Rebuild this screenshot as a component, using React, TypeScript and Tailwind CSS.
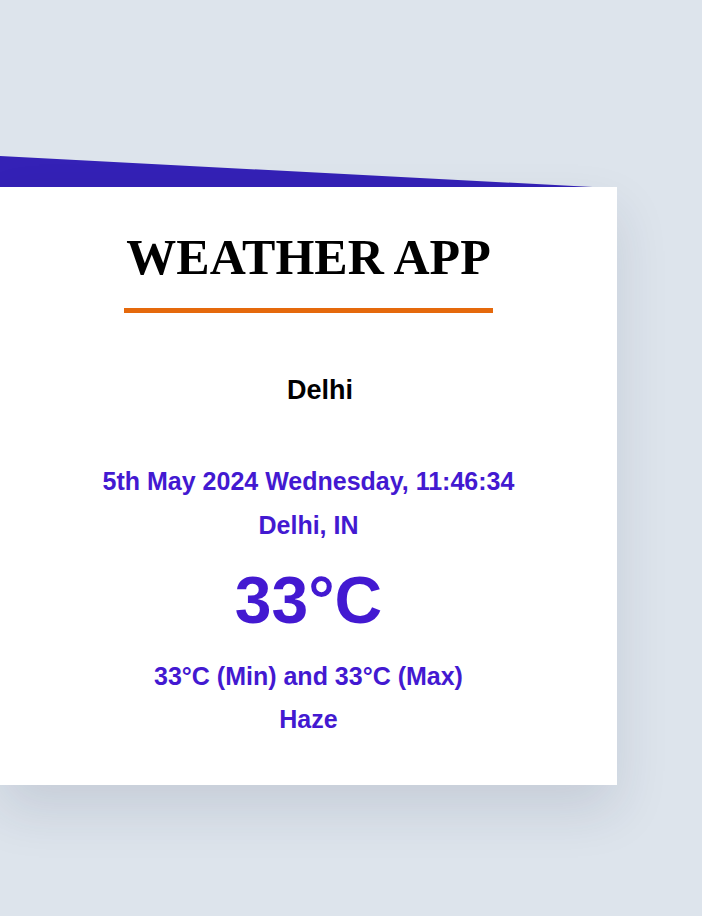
export default function App() {
  const sans = { fontFamily: '"Liberation Sans", Arial, sans-serif' };
  return (
    <div className="min-h-[916px] w-full overflow-hidden bg-[#dde4ec] pt-[187px]" style={sans}>
      <div className="relative w-[617px]">
        {/* tilted band peeking out above the card */}
        <div className="absolute left-0 top-[-31px] h-[480px] w-[617px] origin-top-left rotate-[3deg] bg-[#3421b6]" />
        <div className="relative flex flex-col items-center bg-white pb-[52px] pt-[42px] text-center shadow-[0_25px_50px_rgba(30,45,70,0.12)]">
          <h1
            className="text-[50px] font-bold leading-[57px] text-black"
            style={{ fontFamily: '"Liberation Serif", "Times New Roman", serif' }}
          >
            WEATHER APP
          </h1>
          <div className="mt-[22px] h-[5px] w-[369px] bg-[#e5690c]" />
          <p className="mt-[62px] pl-[23px] text-[27px] font-bold leading-[31px] text-black">Delhi</p>
          <div className="mt-[61px] flex flex-col items-center text-[25px] font-bold leading-[28px] text-[#4319d1]">
            <p>5th May 2024 Wednesday, 11:46:34</p>
            <p className="mt-[16px]">Delhi, IN</p>
            <p className="mt-[23px] text-[66px] leading-[76px]">33°C</p>
            <p className="mt-[24px]">33°C (Min) and 33°C (Max)</p>
            <p className="mt-[15px]">Haze</p>
          </div>
        </div>
      </div>
    </div>
  );
}
